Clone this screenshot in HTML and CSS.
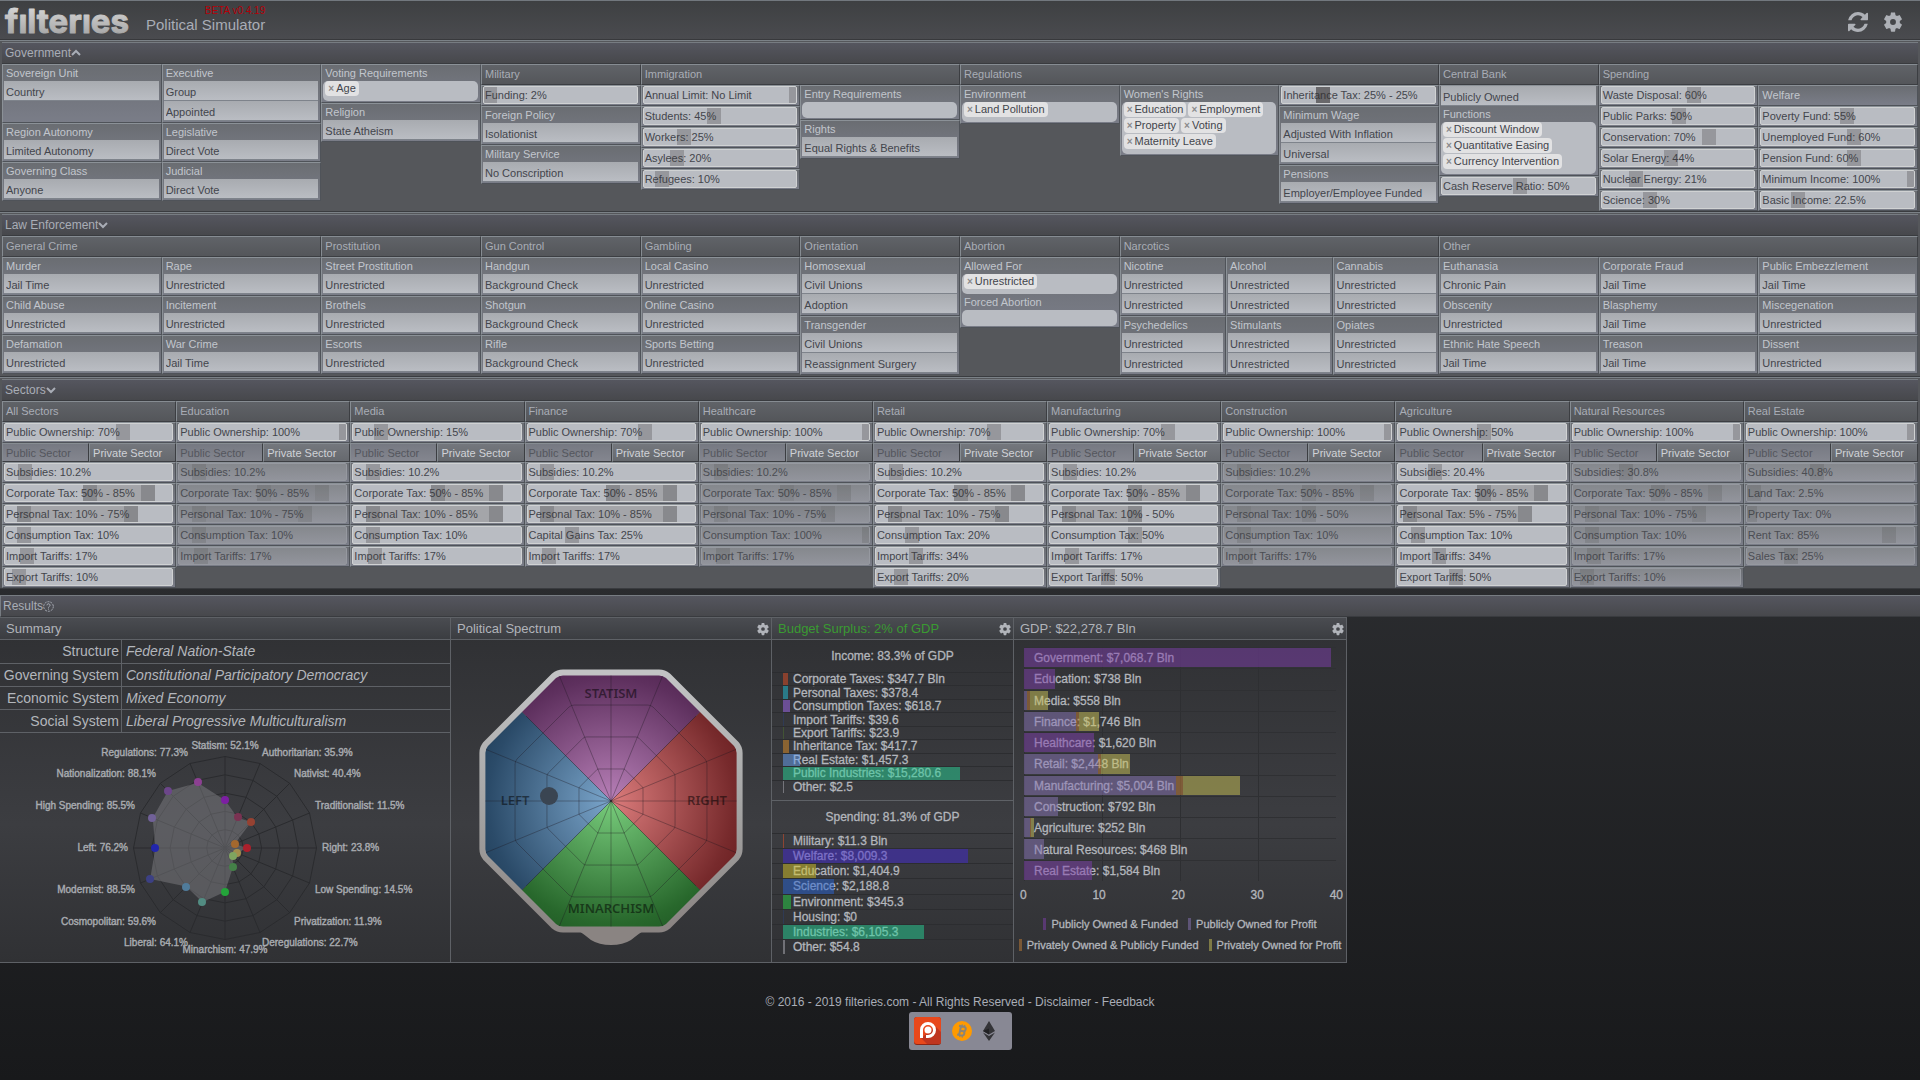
FILE: index.html
```html
<!DOCTYPE html>
<html lang="en">
<head>
<meta charset="utf-8">
<title>filteries - Political Simulator</title>
<meta name="viewport" content="width=device-width, initial-scale=1">
<link rel="stylesheet" href="styles.css">
</head>
<body>
<svg class="defs" aria-hidden="true">
  <symbol id="gear" viewBox="0 0 24 24"><path d="M19.4 13a7.600 7.600 0 0 0 0-2l2.200-1.700a.6.6 0 0 0 .1-.7l-2.300-3.900a.6.6 0 0 0-.7-.2l-2.500 1a7.500 7.500 0 0 0-1.500-.9L14.300 2a.6.6 0 0 0-.6-.5h-3.400a.6.6 0 0 0-.6.5l-.4 2.600a7.500 7.500 0 0 0-1.500.9l-2.500-1a.6.6 0 0 0-.7.2L2.300 8.600a.6.6 0 0 0 .1.700L4.600 11a7.600 7.600 0 0 0 0 2l-2.200 1.700a.6.6 0 0 0-.1.700l2.300 3.900c.1.200.4.300.7.200l2.500-1c.5.4 1 .7 1.500.9l.4 2.600c0 .3.300.5.600.5h3.400c.3 0 .6-.2.6-.5l.4-2.600c.5-.2 1-.5 1.500-.9l2.500 1c.3.100.6 0 .7-.2l2.300-3.900a.6.6 0 0 0-.1-.7zM12 15.200a3.200 3.200 0 1 1 0-6.400 3.200 3.200 0 0 1 0 6.400z"/></symbol>
  <symbol id="refresh" viewBox="0 0 1536 1536"><path d="M1511 928q0 5-1 7-64 268-268 434.500t-478 166.500q-146 0-282.500-55t-243.500-157l-129 129q-19 19-45 19t-45-19-19-45v-448q0-26 19-45t45-19h448q26 0 45 19t19 45-19 45l-137 137q71 66 161 102t187 36q134 0 250-65t186-179q11-17 53-117 8-23 30-23h192q13 0 22.500 9.500t9.500 22.500zm25-800v448q0 26-19 45t-45 19h-448q-26 0-45-19t-19-45 19-45l138-138q-148-137-349-137-134 0-250 65t-186 179q-11 17-53 117-8 23-30 23h-199q-13 0-22.500-9.500t-9.500-22.500v-7q65-268 270-434.500t480-166.500q146 0 284 55.500t245 156.500l130-129q19-19 45-19t45 19 19 45z"/></symbol>
  <symbol id="up" viewBox="0 0 10 10"><path d="M1 7l4-4 4 4" fill="none" stroke="currentColor" stroke-width="2"/></symbol>
  <symbol id="down" viewBox="0 0 10 10"><path d="M1 3l4 4 4-4" fill="none" stroke="currentColor" stroke-width="2"/></symbol>
</svg>

<header class="top">
  <a class="logo" href="#" aria-label="filteries">
    <svg width="136" height="38" viewBox="0 0 136 38">
      <defs><linearGradient id="metal" x1="0" y1="0" x2="0" y2="1"><stop offset="0" stop-color="#dedede"/><stop offset="1" stop-color="#9d9d9d"/></linearGradient></defs>
      <text x="5" y="32" fill="url(#metal)" stroke="url(#metal)">fılterıes</text>
    </svg>
  </a>
  <div class="tagline">
    <span class="beta">BETA v0.4.19</span>
    <h1>Political Simulator</h1>
  </div>
  <div class="tools">
    <button type="button" aria-label="Reset"><svg class="ico20"><use href="#refresh"/></svg></button>
    <button type="button" aria-label="Settings"><svg class="ico22"><use href="#gear"/></svg></button>
  </div>
</header>

<main>
<section class="policy">
  <h2><button type="button" class="bar">Government<svg class="ico10"><use href="#up"/></svg></button></h2>
  <div class="twelve">
    <div class="group span2 cols2">
      <label class="field"><span>Sovereign Unit</span><select><option>Country</option></select></label>
      <label class="field"><span>Executive</span><select><option>Group</option></select><select aria-label="Executive method"><option>Appointed</option></select></label>
      <label class="field"><span>Region Autonomy</span><select><option>Limited Autonomy</option></select></label>
      <label class="field"><span>Legislative</span><select><option>Direct Vote</option></select></label>
      <label class="field"><span>Governing Class</span><select><option>Anyone</option></select></label>
      <label class="field"><span>Judicial</span><select><option>Direct Vote</option></select></label>
    </div>
    <div class="group">
      <div class="field"><span>Voting Requirements</span><div class="tags"><span class="tag"><button type="button">×</button>Age</span></div></div>
      <label class="field"><span>Religion</span><select><option>State Atheism</option></select></label>
    </div>
    <div class="group">
      <h3>Military</h3>
      <div class="row"><label class="slider"><span>Funding: 2%</span><input type="range" value="2"></label></div>
      <label class="field"><span>Foreign Policy</span><select><option>Isolationist</option></select></label>
      <label class="field"><span>Military Service</span><select><option>No Conscription</option></select></label>
    </div>
    <div class="group span2 cols2">
      <h3>Immigration</h3>
      <div>
        <div class="row"><label class="slider"><span>Annual Limit: No Limit</span><input type="range" value="100"></label></div>
        <div class="row"><label class="slider"><span>Students: 45%</span><input type="range" value="45"></label></div>
        <div class="row"><label class="slider"><span>Workers: 25%</span><input type="range" value="25"></label></div>
        <div class="row"><label class="slider"><span>Asylees: 20%</span><input type="range" value="20"></label></div>
        <div class="row"><label class="slider"><span>Refugees: 10%</span><input type="range" value="10"></label></div>
      </div>
      <div>
        <div class="field"><span>Entry Requirements</span><div class="tags"></div></div>
        <label class="field"><span>Rights</span><select><option>Equal Rights &amp; Benefits</option></select></label>
      </div>
    </div>
    <div class="group span3 cols3">
      <h3>Regulations</h3>
      <div>
        <div class="field"><span>Environment</span><div class="tags"><span class="tag"><button type="button">×</button>Land Pollution</span></div></div>
      </div>
      <div>
        <div class="field"><span>Women's Rights</span><div class="tags"><span class="tag"><button type="button">×</button>Education</span><span class="tag"><button type="button">×</button>Employment</span><span class="tag"><button type="button">×</button>Property</span><span class="tag"><button type="button">×</button>Voting</span><span class="tag"><button type="button">×</button>Maternity Leave</span></div></div>
      </div>
      <div>
        <div class="row"><div class="slider pair"><span>Inheritance Tax: 25% - 25%</span><div class="rail" style="--a:.25;--b:.25"><input type="range" value="25" aria-label="Inheritance tax from"><input type="range" value="25" aria-label="Inheritance tax to"></div></div></div>
        <label class="field"><span>Minimum Wage</span><select><option>Adjusted With Inflation</option></select><select aria-label="Minimum wage scope"><option>Universal</option></select></label>
        <label class="field"><span>Pensions</span><select><option>Employer/Employee Funded</option></select></label>
      </div>
    </div>
    <div class="group">
      <h3>Central Bank</h3>
      <div class="field"><select aria-label="Central bank ownership"><option>Publicly Owned</option></select><span>Functions</span><div class="tags"><span class="tag"><button type="button">×</button>Discount Window</span><span class="tag"><button type="button">×</button>Quantitative Easing</span><span class="tag"><button type="button">×</button>Currency Intervention</span></div></div>
      <div class="row"><label class="slider"><span>Cash Reserve Ratio: 50%</span><input type="range" value="50"></label></div>
    </div>
    <div class="group span2 cols2">
      <h3>Spending</h3>
      <div>
        <div class="row"><label class="slider"><span>Waste Disposal: 60%</span><input type="range" value="60"></label></div>
        <div class="row"><label class="slider"><span>Public Parks: 50%</span><input type="range" value="50"></label></div>
        <div class="row"><label class="slider"><span>Conservation: 70%</span><input type="range" value="70"></label></div>
        <div class="row"><label class="slider"><span>Solar Energy: 44%</span><input type="range" value="44"></label></div>
        <div class="row"><label class="slider"><span>Nuclear Energy: 21%</span><input type="range" value="21"></label></div>
        <div class="row"><label class="slider"><span>Science: 30%</span><input type="range" value="30"></label></div>
      </div>
      <div>
        <h4>Welfare</h4>
        <div class="row"><label class="slider"><span>Poverty Fund: 55%</span><input type="range" value="55"></label></div>
        <div class="row"><label class="slider"><span>Unemployed Fund: 60%</span><input type="range" value="60"></label></div>
        <div class="row"><label class="slider"><span>Pension Fund: 60%</span><input type="range" value="60"></label></div>
        <div class="row"><label class="slider"><span>Minimum Income: 100%</span><input type="range" value="100"></label></div>
        <div class="row"><label class="slider"><span>Basic Income: 22.5%</span><input type="range" step="0.5" value="22.5"></label></div>
      </div>
    </div>
  </div>
</section>

<section class="policy law">
  <h2><button type="button" class="bar">Law Enforcement<svg class="ico10"><use href="#down"/></svg></button></h2>
  <div class="twelve">
    <div class="group span2 cols2">
      <h3>General Crime</h3>
      <label class="field"><span>Murder</span><select><option>Jail Time</option></select></label>
      <label class="field"><span>Rape</span><select><option>Unrestricted</option></select></label>
      <label class="field"><span>Child Abuse</span><select><option>Unrestricted</option></select></label>
      <label class="field"><span>Incitement</span><select><option>Unrestricted</option></select></label>
      <label class="field"><span>Defamation</span><select><option>Unrestricted</option></select></label>
      <label class="field"><span>War Crime</span><select><option>Jail Time</option></select></label>
    </div>
    <div class="group">
      <h3>Prostitution</h3>
      <label class="field"><span>Street Prostitution</span><select><option>Unrestricted</option></select></label>
      <label class="field"><span>Brothels</span><select><option>Unrestricted</option></select></label>
      <label class="field"><span>Escorts</span><select><option>Unrestricted</option></select></label>
    </div>
    <div class="group">
      <h3>Gun Control</h3>
      <label class="field"><span>Handgun</span><select><option>Background Check</option></select></label>
      <label class="field"><span>Shotgun</span><select><option>Background Check</option></select></label>
      <label class="field"><span>Rifle</span><select><option>Background Check</option></select></label>
    </div>
    <div class="group">
      <h3>Gambling</h3>
      <label class="field"><span>Local Casino</span><select><option>Unrestricted</option></select></label>
      <label class="field"><span>Online Casino</span><select><option>Unrestricted</option></select></label>
      <label class="field"><span>Sports Betting</span><select><option>Unrestricted</option></select></label>
    </div>
    <div class="group">
      <h3>Orientation</h3>
      <label class="field"><span>Homosexual</span><select><option>Civil Unions</option></select><select aria-label="Homosexual adoption"><option>Adoption</option></select></label>
      <label class="field"><span>Transgender</span><select><option>Civil Unions</option></select><select aria-label="Transgender surgery"><option>Reassignment Surgery</option></select></label>
    </div>
    <div class="group">
      <h3>Abortion</h3>
      <div class="field"><span>Allowed For</span><div class="tags"><span class="tag"><button type="button">×</button>Unrestricted</span></div><span>Forced Abortion</span><div class="tags"></div></div>
    </div>
    <div class="group span2 cols3">
      <h3>Narcotics</h3>
      <label class="field"><span>Nicotine</span><select><option>Unrestricted</option></select><select aria-label="Nicotine sale"><option>Unrestricted</option></select></label>
      <label class="field"><span>Alcohol</span><select><option>Unrestricted</option></select><select aria-label="Alcohol sale"><option>Unrestricted</option></select></label>
      <label class="field"><span>Cannabis</span><select><option>Unrestricted</option></select><select aria-label="Cannabis sale"><option>Unrestricted</option></select></label>
      <label class="field"><span>Psychedelics</span><select><option>Unrestricted</option></select><select aria-label="Psychedelics sale"><option>Unrestricted</option></select></label>
      <label class="field"><span>Stimulants</span><select><option>Unrestricted</option></select><select aria-label="Stimulants sale"><option>Unrestricted</option></select></label>
      <label class="field"><span>Opiates</span><select><option>Unrestricted</option></select><select aria-label="Opiates sale"><option>Unrestricted</option></select></label>
    </div>
    <div class="group span3 cols3">
      <h3>Other</h3>
      <label class="field"><span>Euthanasia</span><select><option>Chronic Pain</option></select></label>
      <label class="field"><span>Corporate Fraud</span><select><option>Jail Time</option></select></label>
      <label class="field"><span>Public Embezzlement</span><select><option>Jail Time</option></select></label>
      <label class="field"><span>Obscenity</span><select><option>Unrestricted</option></select></label>
      <label class="field"><span>Blasphemy</span><select><option>Jail Time</option></select></label>
      <label class="field"><span>Miscegenation</span><select><option>Unrestricted</option></select></label>
      <label class="field"><span>Ethnic Hate Speech</span><select><option>Jail Time</option></select></label>
      <label class="field"><span>Treason</span><select><option>Jail Time</option></select></label>
      <label class="field"><span>Dissent</span><select><option>Unrestricted</option></select></label>
    </div>
  </div>
</section>

<section class="policy">
  <h2><button type="button" class="bar">Sectors<svg class="ico10"><use href="#down"/></svg></button></h2>
  <div class="eleven">
    <div class="group">
      <h3>All Sectors</h3>
      <div class="row"><label class="slider"><span>Public Ownership: 70%</span><input type="range" value="70"></label></div>
      <div class="tabs"><button type="button" class="on">Public Sector</button><button type="button">Private Sector</button></div>
      <div class="row"><label class="slider"><span>Subsidies: 10.2%</span><input type="range" step="0.1" value="10.2"></label></div>
      <div class="row"><div class="slider pair"><span>Corporate Tax: 50% - 85%</span><div class="rail" style="--a:.5;--b:.85"><input type="range" value="50" aria-label="Corporate tax from"><input type="range" value="85" aria-label="Corporate tax to"></div></div></div>
      <div class="row"><div class="slider pair"><span>Personal Tax: 10% - 75%</span><div class="rail" style="--a:.1;--b:.75"><input type="range" value="10" aria-label="Personal tax from"><input type="range" value="75" aria-label="Personal tax to"></div></div></div>
      <div class="row"><label class="slider"><span>Consumption Tax: 10%</span><input type="range" value="10"></label></div>
      <div class="row"><label class="slider"><span>Import Tariffs: 17%</span><input type="range" max="150" value="17"></label></div>
      <div class="row"><label class="slider"><span>Export Tariffs: 10%</span><input type="range" max="150" value="10"></label></div>
    </div>
    <div class="group off">
      <h3>Education</h3>
      <div class="row"><label class="slider"><span>Public Ownership: 100%</span><input type="range" value="100"></label></div>
      <div class="tabs"><button type="button" class="on">Public Sector</button><button type="button">Private Sector</button></div>
      <div class="row"><label class="slider"><span>Subsidies: 10.2%</span><input type="range" step="0.1" value="10.2"></label></div>
      <div class="row"><div class="slider pair"><span>Corporate Tax: 50% - 85%</span><div class="rail" style="--a:.5;--b:.85"><input type="range" value="50" aria-label="Corporate tax from"><input type="range" value="85" aria-label="Corporate tax to"></div></div></div>
      <div class="row"><div class="slider pair"><span>Personal Tax: 10% - 75%</span><div class="rail" style="--a:.1;--b:.75"><input type="range" value="10" aria-label="Personal tax from"><input type="range" value="75" aria-label="Personal tax to"></div></div></div>
      <div class="row"><label class="slider"><span>Consumption Tax: 10%</span><input type="range" value="10"></label></div>
      <div class="row"><label class="slider"><span>Import Tariffs: 17%</span><input type="range" max="150" value="17"></label></div>
    </div>
    <div class="group">
      <h3>Media</h3>
      <div class="row"><label class="slider"><span>Public Ownership: 15%</span><input type="range" value="15"></label></div>
      <div class="tabs"><button type="button" class="on">Public Sector</button><button type="button">Private Sector</button></div>
      <div class="row"><label class="slider"><span>Subsidies: 10.2%</span><input type="range" step="0.1" value="10.2"></label></div>
      <div class="row"><div class="slider pair"><span>Corporate Tax: 50% - 85%</span><div class="rail" style="--a:.5;--b:.85"><input type="range" value="50" aria-label="Corporate tax from"><input type="range" value="85" aria-label="Corporate tax to"></div></div></div>
      <div class="row"><div class="slider pair"><span>Personal Tax: 10% - 85%</span><div class="rail" style="--a:.1;--b:.85"><input type="range" value="10" aria-label="Personal tax from"><input type="range" value="85" aria-label="Personal tax to"></div></div></div>
      <div class="row"><label class="slider"><span>Consumption Tax: 10%</span><input type="range" value="10"></label></div>
      <div class="row"><label class="slider"><span>Import Tariffs: 17%</span><input type="range" max="150" value="17"></label></div>
    </div>
    <div class="group">
      <h3>Finance</h3>
      <div class="row"><label class="slider"><span>Public Ownership: 70%</span><input type="range" value="70"></label></div>
      <div class="tabs"><button type="button" class="on">Public Sector</button><button type="button">Private Sector</button></div>
      <div class="row"><label class="slider"><span>Subsidies: 10.2%</span><input type="range" step="0.1" value="10.2"></label></div>
      <div class="row"><div class="slider pair"><span>Corporate Tax: 50% - 85%</span><div class="rail" style="--a:.5;--b:.85"><input type="range" value="50" aria-label="Corporate tax from"><input type="range" value="85" aria-label="Corporate tax to"></div></div></div>
      <div class="row"><div class="slider pair"><span>Personal Tax: 10% - 85%</span><div class="rail" style="--a:.1;--b:.85"><input type="range" value="10" aria-label="Personal tax from"><input type="range" value="85" aria-label="Personal tax to"></div></div></div>
      <div class="row"><label class="slider"><span>Capital Gains Tax: 25%</span><input type="range" value="25"></label></div>
      <div class="row"><label class="slider"><span>Import Tariffs: 17%</span><input type="range" max="150" value="17"></label></div>
    </div>
    <div class="group off">
      <h3>Healthcare</h3>
      <div class="row"><label class="slider"><span>Public Ownership: 100%</span><input type="range" value="100"></label></div>
      <div class="tabs"><button type="button" class="on">Public Sector</button><button type="button">Private Sector</button></div>
      <div class="row"><label class="slider"><span>Subsidies: 10.2%</span><input type="range" step="0.1" value="10.2"></label></div>
      <div class="row"><div class="slider pair"><span>Corporate Tax: 50% - 85%</span><div class="rail" style="--a:.5;--b:.85"><input type="range" value="50" aria-label="Corporate tax from"><input type="range" value="85" aria-label="Corporate tax to"></div></div></div>
      <div class="row"><div class="slider pair"><span>Personal Tax: 10% - 75%</span><div class="rail" style="--a:.1;--b:.75"><input type="range" value="10" aria-label="Personal tax from"><input type="range" value="75" aria-label="Personal tax to"></div></div></div>
      <div class="row"><label class="slider"><span>Consumption Tax: 100%</span><input type="range" value="100"></label></div>
      <div class="row"><label class="slider"><span>Import Tariffs: 17%</span><input type="range" max="150" value="17"></label></div>
    </div>
    <div class="group">
      <h3>Retail</h3>
      <div class="row"><label class="slider"><span>Public Ownership: 70%</span><input type="range" value="70"></label></div>
      <div class="tabs"><button type="button" class="on">Public Sector</button><button type="button">Private Sector</button></div>
      <div class="row"><label class="slider"><span>Subsidies: 10.2%</span><input type="range" step="0.1" value="10.2"></label></div>
      <div class="row"><div class="slider pair"><span>Corporate Tax: 50% - 85%</span><div class="rail" style="--a:.5;--b:.85"><input type="range" value="50" aria-label="Corporate tax from"><input type="range" value="85" aria-label="Corporate tax to"></div></div></div>
      <div class="row"><div class="slider pair"><span>Personal Tax: 10% - 75%</span><div class="rail" style="--a:.1;--b:.75"><input type="range" value="10" aria-label="Personal tax from"><input type="range" value="75" aria-label="Personal tax to"></div></div></div>
      <div class="row"><label class="slider"><span>Consumption Tax: 20%</span><input type="range" value="20"></label></div>
      <div class="row"><label class="slider"><span>Import Tariffs: 34%</span><input type="range" max="150" value="34"></label></div>
      <div class="row"><label class="slider"><span>Export Tariffs: 20%</span><input type="range" max="150" value="20"></label></div>
    </div>
    <div class="group">
      <h3>Manufacturing</h3>
      <div class="row"><label class="slider"><span>Public Ownership: 70%</span><input type="range" value="70"></label></div>
      <div class="tabs"><button type="button" class="on">Public Sector</button><button type="button">Private Sector</button></div>
      <div class="row"><label class="slider"><span>Subsidies: 10.2%</span><input type="range" step="0.1" value="10.2"></label></div>
      <div class="row"><div class="slider pair"><span>Corporate Tax: 50% - 85%</span><div class="rail" style="--a:.5;--b:.85"><input type="range" value="50" aria-label="Corporate tax from"><input type="range" value="85" aria-label="Corporate tax to"></div></div></div>
      <div class="row"><div class="slider pair"><span>Personal Tax: 10% - 50%</span><div class="rail" style="--a:.1;--b:.5"><input type="range" value="10" aria-label="Personal tax from"><input type="range" value="50" aria-label="Personal tax to"></div></div></div>
      <div class="row"><label class="slider"><span>Consumption Tax: 50%</span><input type="range" value="50"></label></div>
      <div class="row"><label class="slider"><span>Import Tariffs: 17%</span><input type="range" max="150" value="17"></label></div>
      <div class="row"><label class="slider"><span>Export Tariffs: 50%</span><input type="range" max="150" value="50"></label></div>
    </div>
    <div class="group off">
      <h3>Construction</h3>
      <div class="row"><label class="slider"><span>Public Ownership: 100%</span><input type="range" value="100"></label></div>
      <div class="tabs"><button type="button" class="on">Public Sector</button><button type="button">Private Sector</button></div>
      <div class="row"><label class="slider"><span>Subsidies: 10.2%</span><input type="range" step="0.1" value="10.2"></label></div>
      <div class="row"><div class="slider pair"><span>Corporate Tax: 50% - 85%</span><div class="rail" style="--a:.5;--b:.85"><input type="range" value="50" aria-label="Corporate tax from"><input type="range" value="85" aria-label="Corporate tax to"></div></div></div>
      <div class="row"><div class="slider pair"><span>Personal Tax: 10% - 50%</span><div class="rail" style="--a:.1;--b:.5"><input type="range" value="10" aria-label="Personal tax from"><input type="range" value="50" aria-label="Personal tax to"></div></div></div>
      <div class="row"><label class="slider"><span>Consumption Tax: 10%</span><input type="range" value="10"></label></div>
      <div class="row"><label class="slider"><span>Import Tariffs: 17%</span><input type="range" max="150" value="17"></label></div>
    </div>
    <div class="group">
      <h3>Agriculture</h3>
      <div class="row"><label class="slider"><span>Public Ownership: 50%</span><input type="range" value="50"></label></div>
      <div class="tabs"><button type="button" class="on">Public Sector</button><button type="button">Private Sector</button></div>
      <div class="row"><label class="slider"><span>Subsidies: 20.4%</span><input type="range" step="0.1" value="20.4"></label></div>
      <div class="row"><div class="slider pair"><span>Corporate Tax: 50% - 85%</span><div class="rail" style="--a:.5;--b:.85"><input type="range" value="50" aria-label="Corporate tax from"><input type="range" value="85" aria-label="Corporate tax to"></div></div></div>
      <div class="row"><div class="slider pair"><span>Personal Tax: 5% - 75%</span><div class="rail" style="--a:.05;--b:.75"><input type="range" value="5" aria-label="Personal tax from"><input type="range" value="75" aria-label="Personal tax to"></div></div></div>
      <div class="row"><label class="slider"><span>Consumption Tax: 10%</span><input type="range" value="10"></label></div>
      <div class="row"><label class="slider"><span>Import Tariffs: 34%</span><input type="range" max="150" value="34"></label></div>
      <div class="row"><label class="slider"><span>Export Tariffs: 50%</span><input type="range" max="150" value="50"></label></div>
    </div>
    <div class="group off">
      <h3>Natural Resources</h3>
      <div class="row"><label class="slider"><span>Public Ownership: 100%</span><input type="range" value="100"></label></div>
      <div class="tabs"><button type="button" class="on">Public Sector</button><button type="button">Private Sector</button></div>
      <div class="row"><label class="slider"><span>Subsidies: 30.8%</span><input type="range" step="0.1" value="30.8"></label></div>
      <div class="row"><div class="slider pair"><span>Corporate Tax: 50% - 85%</span><div class="rail" style="--a:.5;--b:.85"><input type="range" value="50" aria-label="Corporate tax from"><input type="range" value="85" aria-label="Corporate tax to"></div></div></div>
      <div class="row"><div class="slider pair"><span>Personal Tax: 10% - 75%</span><div class="rail" style="--a:.1;--b:.75"><input type="range" value="10" aria-label="Personal tax from"><input type="range" value="75" aria-label="Personal tax to"></div></div></div>
      <div class="row"><label class="slider"><span>Consumption Tax: 10%</span><input type="range" value="10"></label></div>
      <div class="row"><label class="slider"><span>Import Tariffs: 17%</span><input type="range" max="150" value="17"></label></div>
      <div class="row"><label class="slider"><span>Export Tariffs: 10%</span><input type="range" max="150" value="10"></label></div>
    </div>
    <div class="group off">
      <h3>Real Estate</h3>
      <div class="row"><label class="slider"><span>Public Ownership: 100%</span><input type="range" value="100"></label></div>
      <div class="tabs"><button type="button" class="on">Public Sector</button><button type="button">Private Sector</button></div>
      <div class="row"><label class="slider"><span>Subsidies: 40.8%</span><input type="range" step="0.1" value="40.8"></label></div>
      <div class="row"><label class="slider"><span>Land Tax: 2.5%</span><input type="range" step="0.5" value="2.5"></label></div>
      <div class="row"><label class="slider"><span>Property Tax: 0%</span><input type="range" value="0"></label></div>
      <div class="row"><label class="slider"><span>Rent Tax: 85%</span><input type="range" value="85"></label></div>
      <div class="row"><label class="slider"><span>Sales Tax: 25%</span><input type="range" value="25"></label></div>
    </div>
  </div>
</section>

<section class="results">
  <h2><button type="button" class="bar">Results<svg class="ico11" viewBox="0 0 11 11"><circle cx="5.500" cy="5.500" r="4.800" fill="none" stroke="currentColor" stroke-dasharray="2 1"/><path d="M4 4.300a1.500 1.500 0 1 1 2.200 1.300q-.7.4-.7 1.100M5.500 7.600v1" fill="none" stroke="currentColor"/></svg></button></h2>
  <div class="panels">
    <article class="panel">
      <header><h3>Summary</h3></header>
      <table class="summary">
        <tr><th scope="row">Structure</th><td>Federal Nation-State</td></tr>
        <tr><th scope="row">Governing System</th><td>Constitutional Participatory Democracy</td></tr>
        <tr><th scope="row">Economic System</th><td>Mixed Economy</td></tr>
        <tr><th scope="row">Social System</th><td>Liberal Progressive Multiculturalism</td></tr>
      </table>
      <svg class="radar" viewBox="0 0 450 229">
        <defs><polygon id="ring" points="0,-91.500 35,-84.500 64.700,-64.700 84.500,-35 91.500,0 84.500,35 64.700,64.700 35,84.500 0,91.500 -35,84.500 -64.700,64.700 -84.500,35 -91.500,0 -84.500,-35 -64.700,-64.700 -35,-84.500" vector-effect="non-scaling-stroke"/></defs>
        <g transform="translate(225 115)">
          <g class="web">
            <use href="#ring"/><use href="#ring" transform="scale(.8)"/><use href="#ring" transform="scale(.6)"/><use href="#ring" transform="scale(.4)"/><use href="#ring" transform="scale(.2)"/>
            <path d="M0-91.500V91.500M-91.500 0H91.500M-64.700-64.700L64.700 64.700M64.700-64.700L-64.700 64.700M35-84.500L-35 84.500M-35-84.500L35 84.500M84.500-35L-84.500 35M-84.500-35L84.500 35"/>
          </g>
          <polygon class="shape" points="0,-47.700 12.600,-30.300 26.100,-26.100 9.700,-4 21.800,0 12.300,5.100 7.700,7.700 7.900,19.200 0,43.800 -22.500,54.200 -38.600,38.600 -74.800,31 -69.700,0 -72.300,-29.900 -57,-57 -27.100,-65.300"/>
          <circle cx="0" cy="-48" r="4" fill="#7c1fa2"/><circle cx="13" cy="-31" r="4" fill="#7a3252"/><circle cx="26" cy="-26" r="4" fill="#964232"/><circle cx="10" cy="-4" r="4" fill="#a3682e"/><circle cx="22" cy="0" r="4" fill="#aa202c"/><circle cx="12" cy="5" r="4" fill="#a28e4c"/><circle cx="8" cy="8" r="4" fill="#7fa560"/><circle cx="8" cy="19" r="4" fill="#448048"/><circle cx="0" cy="44" r="4" fill="#24a43a"/><circle cx="-23" cy="54" r="4" fill="#528c82"/><circle cx="-39" cy="39" r="4" fill="#507b9a"/><circle cx="-75" cy="31" r="4" fill="#3c4084"/><circle cx="-70" cy="0" r="4" fill="#2226ac"/><circle cx="-73" cy="-30" r="4" fill="#716198"/><circle cx="-57" cy="-57" r="4" fill="#6c468a"/><circle cx="-27" cy="-66" r="4" fill="#8c4092"/>
          <g class="names">
            <text y="-99" text-anchor="middle">Statism: 52.1%</text>
            <text x="37" y="-92">Authoritarian: 35.9%</text>
            <text x="69" y="-71">Nativist: 40.4%</text>
            <text x="90" y="-39">Traditionalist: 11.5%</text>
            <text x="97" y="3">Right: 23.8%</text>
            <text x="90" y="45">Low Spending: 14.5%</text>
            <text x="69" y="77">Privatization: 11.9%</text>
            <text x="37" y="98">Deregulations: 22.7%</text>
            <text y="105" text-anchor="middle">Minarchism: 47.9%</text>
            <g text-anchor="end">
              <text x="-37" y="98">Liberal: 64.1%</text>
              <text x="-69" y="77">Cosmopolitan: 59.6%</text>
              <text x="-90" y="45">Modernist: 88.5%</text>
              <text x="-97" y="3">Left: 76.2%</text>
              <text x="-90" y="-39">High Spending: 85.5%</text>
              <text x="-69" y="-71">Nationalization: 88.1%</text>
              <text x="-37" y="-92">Regulations: 77.3%</text>
            </g>
          </g>
        </g>
      </svg>
    </article>

    <article class="panel">
      <header><h3>Political Spectrum</h3><button type="button" aria-label="Spectrum settings"><svg class="ico14"><use href="#gear"/></svg></button></header>
      <svg class="octagon" viewBox="0 0 320 321">
        <defs>
          <linearGradient id="rim" x1="0" y1="0" x2="0" y2="1"><stop offset="0" stop-color="#c2c3c4"/><stop offset=".5" stop-color="#a6a6a6"/><stop offset="1" stop-color="#8a8482"/></linearGradient>
          <radialGradient id="pu" gradientUnits="userSpaceOnUse" cx="0" cy="0" r="136"><stop offset="0" stop-color="#b880b8"/><stop offset=".9" stop-color="#5e305e"/><stop offset="1" stop-color="#572a57"/></radialGradient>
          <radialGradient id="bl" gradientUnits="userSpaceOnUse" cx="0" cy="0" r="136"><stop offset="0" stop-color="#7ba6cc"/><stop offset=".9" stop-color="#2b4b69"/><stop offset="1" stop-color="#264561"/></radialGradient>
          <radialGradient id="re" gradientUnits="userSpaceOnUse" cx="0" cy="0" r="136"><stop offset="0" stop-color="#dc7c7c"/><stop offset=".9" stop-color="#772a2c"/><stop offset="1" stop-color="#702426"/></radialGradient>
          <radialGradient id="gr" gradientUnits="userSpaceOnUse" cx="0" cy="0" r="136"><stop offset="0" stop-color="#78cc7c"/><stop offset=".9" stop-color="#28682c"/><stop offset="1" stop-color="#246028"/></radialGradient>
          <path id="oct" d="M-48-125.600H48Q52-125.600 55-123L123-55Q125.600-52 125.600-48V48Q125.600 52 123 55L55 123Q52 125.600 48 125.600H-48Q-52 125.600-55 123L-123 55Q-125.600 52-125.600 48V-48Q-125.600-52-123-55L-55-123Q-52-125.600-48-125.600Z" vector-effect="non-scaling-stroke"/>
          <clipPath id="clip"><use href="#oct"/></clipPath>
        </defs>
        <g transform="translate(160 161)">
          <path d="M-32 130Q-26 134-20 139Q-12 144 0 144Q12 144 20 139Q26 134 32 130Z" fill="#8a8482"/>
          <use href="#oct" fill="none" stroke="url(#rim)" stroke-width="12" stroke-linejoin="round"/>
          <g clip-path="url(#clip)">
            <path d="M0 0L-130-130H130Z" fill="url(#pu)"/><path d="M0 0L130-130V130Z" fill="url(#re)"/><path d="M0 0L130 130H-130Z" fill="url(#gr)"/><path d="M0 0L-130 130V-130Z" fill="url(#bl)"/>
            <path class="spokes" d="M0-126V126M-126 0H126M-126-126L126 126M126-126L-126 126M52-126L-52 126M-52-126L52 126M126-52L-126 52M-126-52L126 52"/>
          </g>
          <g class="spokes"><use href="#oct" transform="scale(.764)"/><use href="#oct" transform="scale(.51)"/><use href="#oct" transform="scale(.255)"/></g>
          <circle cx="-62" cy="-5" r="9" fill="#3a4552"/>
          <g class="poles"><text y="-103">STATISM</text><text x="-96" y="4">LEFT</text><text x="96" y="4">RIGHT</text><text y="112">MINARCHISM</text></g>
        </g>
      </svg>
    </article>

    <article class="panel">
      <header><h3 class="good">Budget Surplus: 2% of GDP</h3><button type="button" aria-label="Budget settings"><svg class="ico14"><use href="#gear"/></svg></button></header>
      <div class="budget">
        <h4>Income: 83.3% of GDP</h4>
        <ul>
          <li>Corporate Taxes: $347.7 Bln<i class="rust" style="width:2%"></i></li>
          <li>Personal Taxes: $378.4<i class="teal" style="width:2%"></i></li>
          <li>Consumption Taxes: $618.7<i class="violet" style="width:3.1%"></i></li>
          <li>Import Tariffs: $39.6<i class="navy" style="width:.5%"></i></li>
          <li>Export Tariffs: $23.9<i class="olive" style="width:.5%"></i></li>
          <li>Inheritance Tax: $417.7<i class="amber" style="width:2.5%"></i></li>
          <li>Real Estate: $1,457.3<i class="sky" style="width:7.1%"></i></li>
          <li>Public Industries: $15,280.6<i class="mint" style="width:73.4%"></i></li>
          <li>Other: $2.5<i class="grey" style="width:.5%"></i></li>
        </ul>
      </div>
      <div class="budget">
        <h4>Spending: 81.3% of GDP</h4>
        <ul>
          <li>Military: $11.3 Bln<i class="rust" style="width:.5%"></i></li>
          <li>Welfare: $8,009.3<i class="indigo" style="width:76.6%"></i></li>
          <li>Education: $1,404.9<i class="gold" style="width:13.5%"></i></li>
          <li>Science: $2,188.8<i class="blue" style="width:21.1%"></i></li>
          <li>Environment: $345.3<i class="green" style="width:3.5%"></i></li>
          <li>Housing: $0<i class="navy" style="width:.5%"></i></li>
          <li>Industries: $6,105.3<i class="mint" style="width:58.5%"></i></li>
          <li>Other: $54.8<i class="grey" style="width:.9%"></i></li>
        </ul>
      </div>
    </article>

    <article class="panel">
      <header><h3>GDP: $22,278.7 Bln</h3><button type="button" aria-label="GDP settings"><svg class="ico14"><use href="#gear"/></svg></button></header>
      <div class="gdp">
        <ul>
          <li>Government: $7,068.7 Bln<div><i class="pf" style="width:98.3%"></i></div></li>
          <li>Education: $738 Bln<div><i class="pf" style="width:10%"></i></div></li>
          <li>Media: $558 Bln<div><i class="pp" style="width:1.1%"></i><i class="vf" style="width:.7%"></i><i class="vp" style="width:5.8%"></i></div></li>
          <li>Finance: $1,746 Bln<div><i class="pp" style="width:16.7%"></i><i class="vf" style="width:1%"></i><i class="vp" style="width:6.4%"></i></div></li>
          <li>Healthcare: $1,620 Bln<div><i class="pf" style="width:22.5%"></i></div></li>
          <li>Retail: $2,448 Bln<div><i class="pp" style="width:23.8%"></i><i class="vf" style="width:.9%"></i><i class="vp" style="width:9.2%"></i></div></li>
          <li>Manufacturing: $5,004 Bln<div><i class="pp" style="width:48.6%"></i><i class="vf" style="width:2.3%"></i><i class="vp" style="width:18.4%"></i></div></li>
          <li>Construction: $792 Bln<div><i class="pp" style="width:11%"></i></div></li>
          <li>Agriculture: $252 Bln<div><i class="pp" style="width:1.8%"></i><i class="vf" style="width:.4%"></i><i class="vp" style="width:1.1%"></i></div></li>
          <li>Natural Resources: $468 Bln<div><i class="pp" style="width:6.3%"></i></div></li>
          <li>Real Estate: $1,584 Bln<div><i class="pf" style="width:21.8%"></i></div></li>
        </ul>
        <div class="axis"><span>0</span><span>10</span><span>20</span><span>30</span><span>40</span></div>
        <div class="legend"><span><i class="pf"></i>Publicly Owned &amp; Funded</span><span><i class="pp"></i>Publicly Owned for Profit</span><span><i class="vf"></i>Privately Owned &amp; Publicly Funded</span><span><i class="vp"></i>Privately Owned for Profit</span></div>
      </div>
    </article>
  </div>
</section>
</main>

<footer class="foot">
  <p>© 2016 - 2019 filteries.com - All Rights Reserved - <a href="#">Disclaimer</a> - <a href="#">Feedback</a></p>
  <div class="donate">
    <a href="#" aria-label="Patreon"><svg width="27" height="28" viewBox="0 0 27 28"><rect width="27" height="28" rx="3" fill="#8e2615"/><rect width="27" height="27" rx="3" fill="#e8481c"/><path d="M22 10l5 5v9a3 3 0 0 1-3 3H13l-6-6z" fill="#bf3520"/><path d="M7.500 21v-8a6.500 6.500 0 1 1 6.500 6.500h-2" fill="none" stroke="#fff" stroke-width="3"/><circle cx="14" cy="13" r="3.500" fill="#fff"/></svg></a>
    <a href="#" aria-label="Bitcoin"><svg width="20" height="20" viewBox="0 0 20 20"><circle cx="10" cy="10" r="10" fill="#ff9a00"/><g transform="rotate(12 10 10)" fill="none" stroke="#8b8577" stroke-width="2"><path d="M6 5.500h5a2.200 2.200 0 0 1 0 4.500H8M11 10a2.300 2.300 0 0 1 0 4.500H6M8 5.500v9"/><path d="M9 3.500v2M11.500 3.500v2M9 14.500v2M11.500 14.500v2" stroke-width="1.200"/></g></svg></a>
    <a href="#" aria-label="Ethereum"><svg width="12" height="20" viewBox="0 0 12 20"><path d="M6 0l6 10-6 3.500L0 10z" fill="#343438"/><path d="M6 7.500v6L0 10z" fill="#222225"/><path d="M0 11.500l6 3.500 6-3.500L6 20z" fill="#343438"/></svg></a>
  </div>
</footer>
</body>
</html>
```
FILE: styles.css
```css
* { box-sizing: border-box; }

body {
  margin: 0;
  min-height: 100vh;
  background: linear-gradient(#404246, #18191b);
  color: #a9adb6;
  font: 11px/16px "Liberation Sans", Arial, sans-serif;
}

h1, h2, h3, h4, p, ul { margin: 0; padding: 0; font-size: inherit; font-weight: normal; }
ul { list-style: none; }
a { color: inherit; text-decoration: none; }
button, select, input { font: inherit; color: inherit; margin: 0; border: 0; border-radius: 0; padding: 0; background: none; }
button { cursor: pointer; }
svg { display: block; fill: currentColor; }

.defs { position: absolute; width: 0; height: 0; }
.ico10 { width: 10px; height: 10px; }
.ico11 { width: 11px; height: 11px; }
.ico14 { width: 14px; height: 14px; }
.ico20 { width: 20px; height: 20px; }
.ico22 { width: 22px; height: 22px; }

/* Header */
.top {
  display: flex;
  height: 40px;
  padding-right: 16px;
  border-top: 1px solid #72787e;
  border-bottom: 1px solid #38393c;
  background: linear-gradient(#3e4042, #4a4b4f);
}
.logo svg { overflow: visible; }
.logo text { font: 700 33px Inter, sans-serif; stroke-width: 1; stroke-linejoin: round; }
.tagline { display: flex; flex-direction: column; align-items: flex-end; padding: 5px 0 0 10px; }
.beta { color: #b40008; font-size: 10px; line-height: 10px; }
.tagline h1 { font-size: 15px; line-height: 18px; }
.tools { display: flex; align-items: center; gap: 14px; margin-left: auto; padding-top: 4px; color: #adb0b6; }

/* Policy sections */
.policy {
  padding: 1px 2px 0;
  border: solid #7b8187;
  border-width: 1px 0;
  border-bottom-color: #3a3c40;
  background: #55575b;
}
.law { padding-bottom: 1px; }
.bar {
  display: flex;
  align-items: center;
  width: 100%;
  height: 22px;
  padding-left: 3px;
  border: solid #777c82;
  border-width: 1px 0;
  border-bottom-color: #393b3f;
  background: linear-gradient(#55565f, #47484c);
  font-size: 12px;
}
.twelve, .eleven { display: grid; align-items: start; }
.twelve { grid-template-columns: repeat(12, minmax(0, 1fr)); }
.eleven { grid-template-columns: repeat(11, minmax(0, 1fr)); }
.group { display: grid; align-items: stretch; }
.span2 { grid-column: span 2; }
.span3 { grid-column: span 3; }
.cols2 { grid-template-columns: repeat(2, minmax(0, 1fr)); }
.cols3 { grid-template-columns: repeat(3, minmax(0, 1fr)); }
.group h3 {
  grid-column: 1 / -1;
  height: 21px;
  padding: 1px 3px;
  border: 1px solid #868c92;
  border-right-color: #3c3e42;
  border-bottom-color: #3c3e42;
  background: linear-gradient(#606368, #54565a);
}
.field, .row, .group h4 {
  display: block;
  border: 1px solid #8b9197;
  border-right-color: #4f5359;
  border-bottom-color: #4f5359;
  background: linear-gradient(#6a6d72, #7a7d88);
}
.field { padding: 0 2px 1px 1px; color: #c2c6cd; }
.field > span { display: block; height: 16px; padding: 0 2px; }
.group h4 { height: 21px; padding: 1px 3px; color: #c2c6cd; }
select {
  display: block;
  width: 100%;
  height: 20px;
  padding: 2px 2px 0;
  appearance: none;
  border-bottom: 1px solid #7e838b;
  background: linear-gradient(#a8abb0, #babdc3);
  color: #43454c;
}

/* Tag boxes */
.tags {
  display: flex;
  flex-wrap: wrap;
  gap: 1px 2px;
  min-height: 16px;
  padding: 0 2px;
  border-radius: 5px;
  background: #b9bcc2;
}
.tags:not(:empty) { padding-bottom: 5px; }
.tag { display: flex; gap: 2px; height: 15px; padding: 0 3px; border-radius: 4px; background: #e2e2e3; color: #43454c; line-height: 15px; }
.tag button { color: #8a8a8c; font-size: 10px; font-weight: bold; }

/* Sliders */
.row { height: 21px; padding: 0 2px 0 1px; }
.slider {
  display: block;
  position: relative;
  height: 18px;
  overflow: hidden;
  border: 1px solid #d0d2d3;
  border-radius: 2px;
  background: #b9bcc2;
  color: #43454c;
}
.slider span { display: block; padding-left: 1px; }
.slider > input, .rail { position: absolute; top: 0; left: -4px; width: calc(100% + 11px); height: 16px; }
.rail input { position: absolute; inset: 0; width: 100%; height: 16px; pointer-events: none; }
.rail::before {
  content: "";
  position: absolute;
  inset: 0 auto 0 calc(14px + (100% - 14px) * var(--a));
  width: calc((100% - 14px) * (var(--b) - var(--a)) - 14px);
  background: rgb(80 76 70 / .2);
}
input[type="range"] { appearance: none; }
input[type="range"]::-webkit-slider-thumb { appearance: none; width: 14px; height: 16px; background: rgb(60 58 56 / .28); pointer-events: auto; }
.pair input[type="range"]::-webkit-slider-thumb { background: rgb(50 48 46 / .36); }

.tabs { display: grid; grid-template-columns: 1fr 1fr; }
.tabs button {
  height: 19px;
  padding: 0 3px;
  border: 1px solid #868c92;
  border-right-color: #3c3e42;
  border-bottom-color: #3c3e42;
  background: linear-gradient(#74777d, #66696e);
  color: #d0d2d7;
  text-align: left;
}
.tabs .on { background: linear-gradient(#767982, #84868f); color: #54565d; }
.off .tabs ~ .row .slider { border-color: #9699a0; background: linear-gradient(#85888d, #92949c); color: #4b4d53; }
.off .tabs ~ .row input::-webkit-slider-thumb { background: rgb(50 48 46 / .14); }
.off .tabs ~ .row .rail::before { background: rgb(50 48 46 / .06); }

/* Results */
.results { margin-top: 6px; }
.results .bar { border-left: 1px solid #777c82; padding-left: 2px; }
.panels { display: grid; grid-template-columns: 451fr 321fr 242fr 333fr 573fr; }
.panel {
  border: solid #5e6166;
  border-width: 0 1px 1px 0;
  background: linear-gradient(#2f3033, #3c3d41 60%, #303134);
}
.panel header {
  display: flex;
  align-items: center;
  justify-content: space-between;
  height: 23px;
  padding: 0 1px 0 6px;
  border-top: 1px solid #5e6166;
  border-bottom: 1px solid #5e6166;
  background: linear-gradient(#4a4c51, #3b3d41);
  color: #b1b4ba;
  font-size: 13px;
}
.panel .good { color: #3a9a32; }
.summary { width: 100%; border-collapse: collapse; font-size: 14px; }
.summary th, .summary td { height: 23px; padding: 0 3px; border-bottom: 1px solid #5e6166; color: #b3b6bc; font-weight: normal; }
.summary th { width: 27%; border-right: 1px solid #5e6166; padding-right: 2px; text-align: right; white-space: nowrap; }
.summary td { padding-left: 4px; font-style: italic; }

.radar, .octagon { width: 100%; height: auto; }
.web { fill: none; stroke: #2a2b2e; stroke-width: 1; }
.shape { fill: #8a8a8e; fill-opacity: .42; }
.names { fill: #a8abb0; stroke: #a8abb0; stroke-width: .4; font-size: 10px; }
.spokes { fill: none; stroke: #1c1620; stroke-opacity: .35; stroke-width: 1; }
.poles { fill: #000; fill-opacity: .5; font: 600 13px "Noto Sans", sans-serif; text-anchor: middle; }

.budget, .gdp { color: #b3b6bc; font-size: 12px; -webkit-text-stroke: .3px #b3b6bc; }
.budget { height: 161px; border-bottom: 1px solid #5e6166; }
.budget:last-child { height: 159px; border-bottom: 0; }
.budget h4 { height: 32px; line-height: 32px; text-align: center; }
.budget ul { display: grid; grid-auto-rows: 1fr; height: 121px; }
.budget li { display: flex; align-items: center; position: relative; padding-left: 21px; border-top: 1px solid #2c2d30; line-height: 12px; }
.budget i { position: absolute; top: 0; bottom: 0; left: 11px; opacity: .5; }

.gdp { padding: 7px 10px 0; }
.gdp ul { display: grid; grid-auto-rows: 1fr; height: 234px; background: repeating-linear-gradient(90deg, #2e2f32 0 1px, transparent 1px 25%); }
.gdp li { display: flex; align-items: center; position: relative; padding-left: 10px; border-top: 1px solid #2f3033; }
.gdp li div { display: flex; position: absolute; inset: 0 0 1px; opacity: .5; }
.axis { display: flex; justify-content: space-between; margin: 0 -7px 0 -4px; padding-top: 6px; }
.legend { display: flex; flex-wrap: wrap; justify-content: center; gap: 5px 10px; margin: 13px -10px 0; font-size: 11px; }
.legend span { display: flex; align-items: center; gap: 5px; }
.legend i { width: 3px; height: 12px; opacity: .5; }

.rust { background: #e04e26; }
.teal { background: #20c2da; }
.violet { background: #a268f2; }
.navy { background: #2a4070; }
.olive { background: #4d7030; }
.amber { background: #de8e28; }
.sky { background: #68a2f4; }
.mint { background: #26d296; }
.grey { background: #b0b0b8; }
.indigo { background: #442ad2; }
.gold { background: #d4c226; }
.blue { background: #2864d6; }
.green { background: #26d246; }
.pf { background: #7e3eac; }
.pp { background: #8874b6; }
.vf { background: #c27e36; }
.vp { background: #cac256; }

/* Footer */
.foot { padding-top: 31px; text-align: center; font-size: 12px; }
.donate { display: inline-flex; align-items: center; gap: 11px; width: 103px; height: 38px; margin-top: 2px; padding-left: 5px; border-radius: 3px; background: #888894; }
```
